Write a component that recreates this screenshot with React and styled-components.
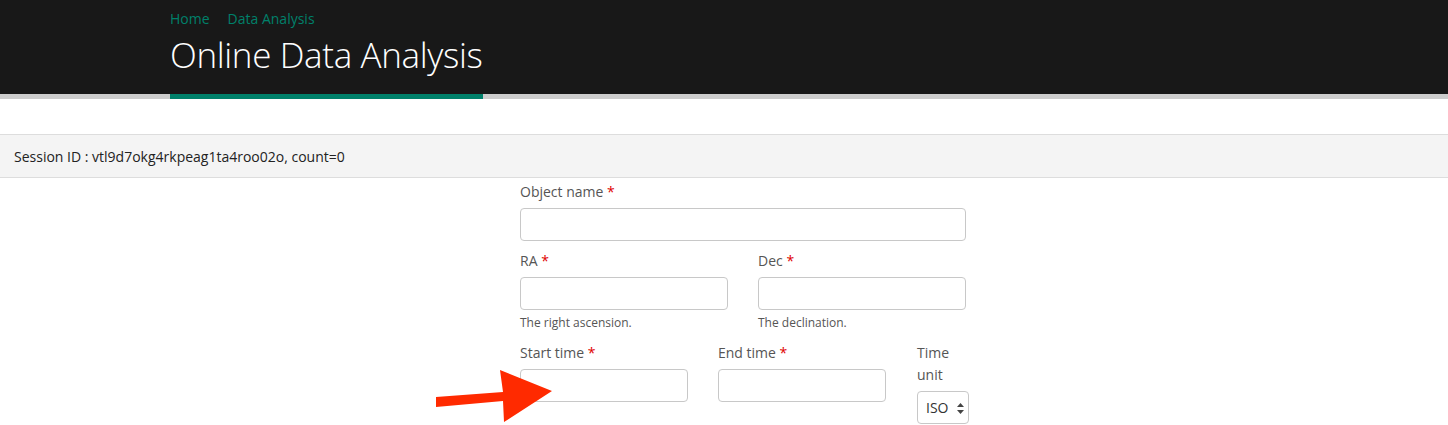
import React from 'react'
import styled, { createGlobalStyle } from 'styled-components'

const GlobalStyle = createGlobalStyle`
  body {
    margin: 0;
    background: #fff;
    font-family: "Open Sans", "Liberation Sans", sans-serif;
  }
`

const Header = styled.div`
  background: #181818;
  height: 94px;
  border-bottom: 5px solid #cccccc;
`

const HeaderInner = styled.div`
  margin-left: 170px;
  display: inline-flex;
  flex-direction: column;
  height: 99px;
  box-sizing: border-box;
  padding-top: 9px;
  border-bottom: 5px solid #00806a;
`

const Crumbs = styled.div`
  display: flex;
  gap: 18px;
  font-size: 14px;
  line-height: 20px;
  a {
    color: #00806a;
    text-decoration: none;
  }
`

const Title = styled.h1`
  margin: 3px 0 0;
  font-size: 35px;
  font-weight: 300;
  line-height: 46px;
  color: #fff;
  letter-spacing: -0.35px;
`

const SessionBar = styled.div`
  margin-top: 35px;
  background: #f4f4f4;
  border-top: 1px solid #dddddd;
  border-bottom: 1px solid #dddddd;
  height: 42px;
  display: flex;
  align-items: center;
  padding-left: 14px;
  font-size: 14px;
  color: #222;
`

const Form = styled.form`
  margin-left: 520px;
  width: 446px;
  padding-top: 3px;
  display: flex;
  flex-direction: column;
`

const Row = styled.div`
  display: flex;
  gap: ${p => p.gap || 30}px;
`

const Field = styled.div`
  display: flex;
  flex-direction: column;
  flex-shrink: 0;
  width: ${p => p.w ? p.w + 'px' : '100%'};
  margin-bottom: ${p => p.mb || 9}px;
  margin-left: ${p => p.ml || 0}px;
`

const Label = styled.label`
  font-size: 14px;
  line-height: 22px;
  color: #555;
  margin-bottom: 5px;
`

const Req = styled.span`
  color: #e00000;
`

const Input = styled.input`
  box-sizing: border-box;
  height: 33px;
  width: 100%;
  border: 1px solid #c8c8c8;
  border-radius: 4px;
  background: #fff;
  margin: 0;
`

const Help = styled.div`
  font-size: 12px;
  line-height: 16px;
  color: #555;
  margin-top: 5px;
`

const SelectBox = styled.div`
  position: relative;
  box-sizing: border-box;
  width: 52px;
  height: 33px;
  border: 1px solid #c8c8c8;
  border-radius: 4px;
  display: flex;
  align-items: center;
  padding-left: 8px;
  font-size: 14px;
  color: #333;
`

const Arrows = styled.svg`
  position: absolute;
  right: 4px;
  top: 11px;
`

const Pointer = styled.svg`
  position: absolute;
  left: 430px;
  top: 362px;
  pointer-events: none;
`

export default function App() {
  return (
    <>
      <GlobalStyle />
      <Header>
        <HeaderInner>
          <Crumbs>
            <a href="#">Home</a>
            <a href="#">Data Analysis</a>
          </Crumbs>
          <Title>Online Data Analysis</Title>
        </HeaderInner>
      </Header>
      <SessionBar>Session ID : vtl9d7okg4rkpeag1ta4roo02o, count=0</SessionBar>
      <Form>
        <Field>
          <Label>Object name <Req>*</Req></Label>
          <Input />
        </Field>
        <Row gap={30}>
          <Field w={208} mb={11}>
            <Label>RA <Req>*</Req></Label>
            <Input />
            <Help>The right ascension.</Help>
          </Field>
          <Field w={208} mb={11}>
            <Label>Dec <Req>*</Req></Label>
            <Input />
            <Help>The declination.</Help>
          </Field>
        </Row>
        <Row gap={30}>
          <Field w={168}>
            <Label>Start time <Req>*</Req></Label>
            <Input />
          </Field>
          <Field w={168}>
            <Label>End time <Req>*</Req></Label>
            <Input />
          </Field>
          <Field w={52} ml={1}>
            <Label>Time unit</Label>
            <SelectBox>
              ISO
              <Arrows width="7" height="11" viewBox="0 0 7 11">
                <path d="M3.5 0 L7 4 L0 4 Z M0 7 L7 7 L3.5 11 Z" fill="#444" />
              </Arrows>
            </SelectBox>
          </Field>
        </Row>
      </Form>
      <Pointer width="130" height="64" viewBox="0 0 130 64">
        <polygon
          points="6,35 73,30 70,8 122,29 74,60 73,39 6,45"
          fill="#ff2a00"
        />
      </Pointer>
    </>
  )
}
